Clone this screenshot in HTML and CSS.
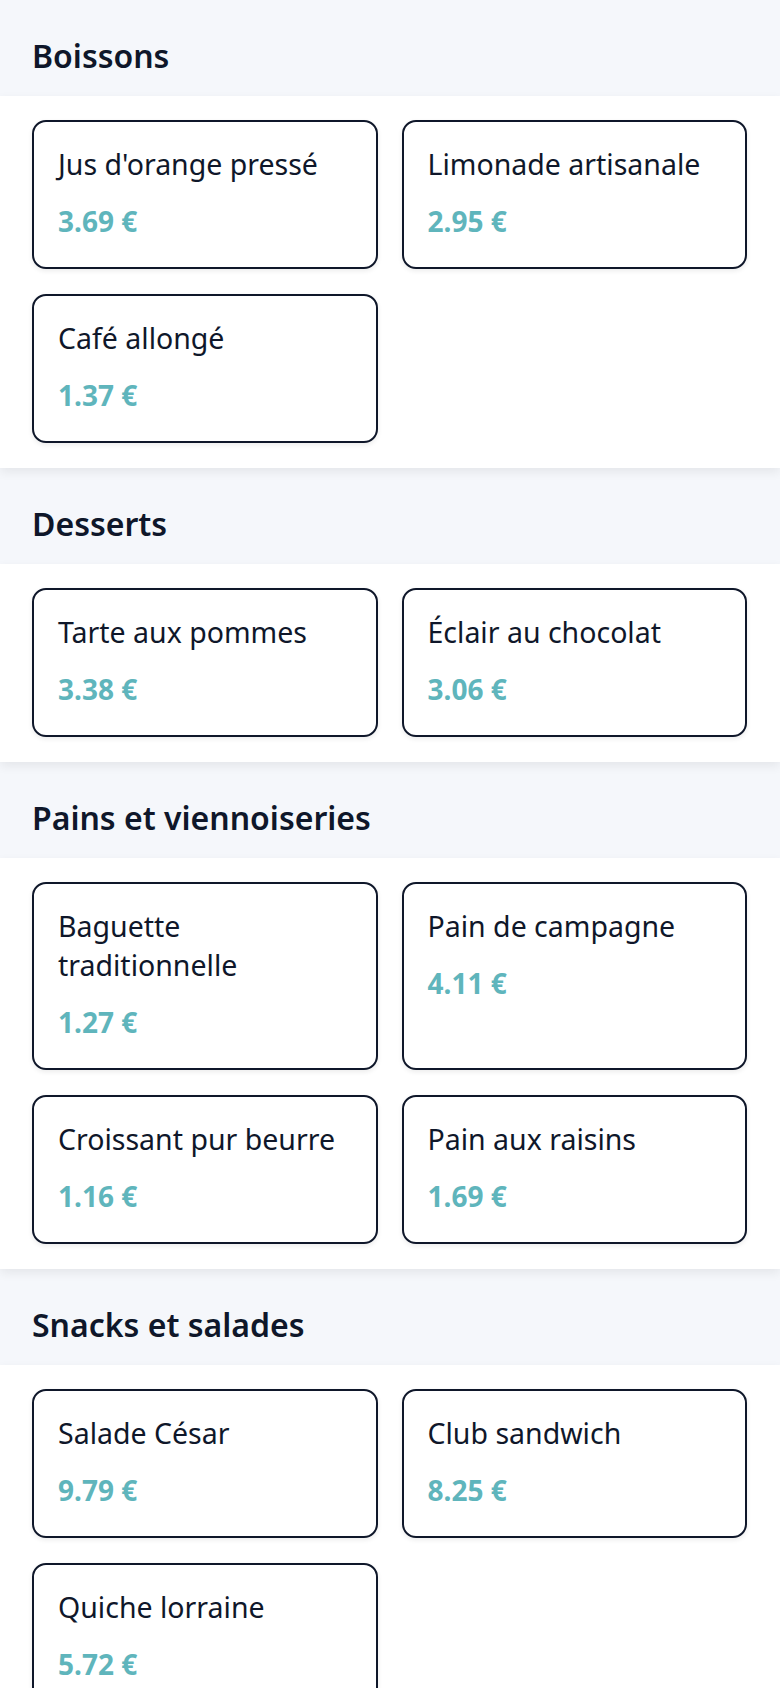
FILE: index.html
```html
<!DOCTYPE html>
<html lang="fr">
<head>
    <meta charset="UTF-8">
    <meta name="viewport" content="width=device-width, initial-scale=1.0">
    <title>Menu</title>
    <link rel="stylesheet" href="styles.css">
</head>
<body>
    <div class="menu">
        <section class="category">
            <h2 class="category-title">Boissons</h2>
            <div class="items">
                <div class="item">
                    <div class="item-name">Jus d'orange pressé</div>
                    <div class="item-price">3.69 €</div>
                </div>
                <div class="item">
                    <div class="item-name">Limonade artisanale</div>
                    <div class="item-price">2.95 €</div>
                </div>
                <div class="item">
                    <div class="item-name">Café allongé</div>
                    <div class="item-price">1.37 €</div>
                </div>
            </div>
        </section>

        <section class="category">
            <h2 class="category-title">Desserts</h2>
            <div class="items">
                <div class="item">
                    <div class="item-name">Tarte aux pommes</div>
                    <div class="item-price">3.38 €</div>
                </div>
                <div class="item">
                    <div class="item-name">Éclair au chocolat</div>
                    <div class="item-price">3.06 €</div>
                </div>
            </div>
        </section>

        <section class="category">
            <h2 class="category-title">Pains et viennoiseries</h2>
            <div class="items">
                <div class="item">
                    <div class="item-name">Baguette traditionnelle</div>
                    <div class="item-price">1.27 €</div>
                </div>
                <div class="item">
                    <div class="item-name">Pain de campagne</div>
                    <div class="item-price">4.11 €</div>
                </div>
                <div class="item">
                    <div class="item-name">Croissant pur beurre</div>
                    <div class="item-price">1.16 €</div>
                </div>
                <div class="item">
                    <div class="item-name">Pain aux raisins</div>
                    <div class="item-price">1.69 €</div>
                </div>
            </div>
        </section>

        <section class="category">
            <h2 class="category-title">Snacks et salades</h2>
            <div class="items">
                <div class="item">
                    <div class="item-name">Salade César</div>
                    <div class="item-price">9.79 €</div>
                </div>
                <div class="item">
                    <div class="item-name">Club sandwich</div>
                    <div class="item-price">8.25 €</div>
                </div>
                <div class="item">
                    <div class="item-name">Quiche lorraine</div>
                    <div class="item-price">5.72 €</div>
                </div>
            </div>
        </section>
    </div>
</body>
</html>
```

FILE: styles.css
```css
body {
    margin: 0;
    font-family: "Noto Sans", "Open Sans", sans-serif;
    background-color: #f5f7fb;
    color: #0f172a;
}

.category {
    background-color: #f5f7fb;
}

.category-title {
    margin: 0;
    padding: 34px 32px 18px;
    font-size: 32px;
    font-weight: 600;
    line-height: 44px;
}

.items {
    display: grid;
    grid-template-columns: 1fr 1fr;
    column-gap: 24px;
    row-gap: 25px;
    padding: 24px 33px 25px 32px;
    background-color: #fff;
    box-shadow: 0 4px 10px rgba(0,0,0,0.07);
    position: relative;
}

.item {
    border: 2px solid #0f172a;
    border-radius: 14px;
    padding: 23px 24px 27px;
    background-color: #fff;
    box-shadow: 0 2px 5px rgba(0,0,0,0.08);
}

.item-name {
    font-size: 28.5px;
    line-height: 39px;
}

.item-price {
    margin-top: 18px;
    font-size: 28px;
    font-weight: 700;
    line-height: 38px;
    color: #5fb5bc;
}
```
